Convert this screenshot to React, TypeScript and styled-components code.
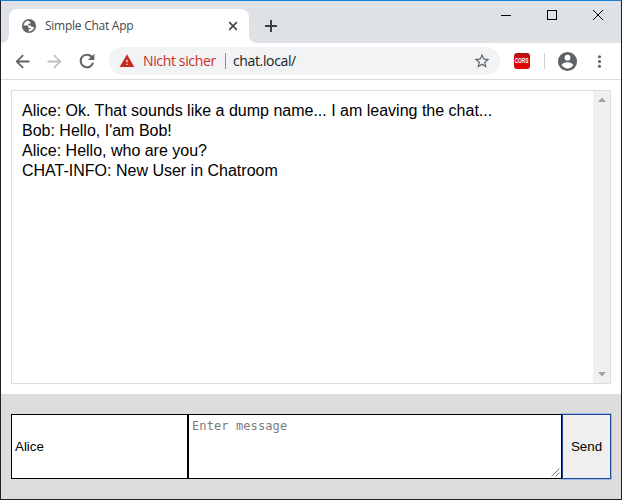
import React, { useState } from "react";
import styled, { createGlobalStyle } from "styled-components";

const GlobalStyle = createGlobalStyle`
  * { box-sizing: border-box; }
  html, body { margin: 0; padding: 0; }
  body { overflow: hidden; background: #fff; }
  svg { display: block; flex: none; }
`;

const Window = styled.div`
  display: flex;
  flex-direction: column;
  width: 622px;
  height: 500px;
  border: 1px solid #202124;
  border-top-color: #1883d7;
  background: #fff;
`;

const TabStrip = styled.header`
  display: flex;
  height: 42px;
  background: #dee1e6;
`;

const Tab = styled.div`
  position: relative;
  display: flex;
  align-items: center;
  width: 240px;
  height: 34px;
  margin: 8px 0 0 8px;
  padding: 0 10px 0 13px;
  border-radius: 8px 8px 0 0;
  background: #fff;

  &::before,
  &::after {
    content: "";
    position: absolute;
    bottom: 0;
    width: 8px;
    height: 8px;
  }
  &::before {
    left: -8px;
    background: radial-gradient(circle at 0 0, transparent 7.5px, #fff 8.3px);
  }
  &::after {
    right: -8px;
    background: radial-gradient(circle at 100% 0, transparent 7.5px, #fff 8.3px);
  }
`;

const TabTitle = styled.span`
  flex: 1;
  margin-left: 9px;
  font: 12px/16px "Open Sans", sans-serif;
  letter-spacing: -0.26px;
  color: #45494d;
  white-space: nowrap;
`;

const BareButton = styled.button`
  display: flex;
  align-items: center;
  justify-content: center;
  padding: 0;
  border: 0;
  background: transparent;
`;

const NewTab = styled(BareButton)`
  width: 28px;
  height: 34px;
  margin: 8px 0 0 8px;
`;

const Captions = styled.div`
  display: flex;
  height: 29px;
  margin-left: auto;
`;

const Caption = styled(BareButton)`
  width: 46px;
  height: 28px;
`;

const Toolbar = styled.nav`
  display: flex;
  align-items: center;
  height: 37px;
  padding-left: 5.5px;
  border-bottom: 1px solid #dcdcdc;
  background: #fff;
`;

const NavButton = styled(BareButton)`
  width: 32px;
  height: 28px;
`;

const AddressBar = styled.div`
  display: flex;
  align-items: center;
  width: 391px;
  height: 28px;
  margin-left: 6.5px;
  padding: 0 9px 0 10px;
  border-radius: 14px;
  background: #f1f3f4;
  font: 14px/20px "Open Sans", sans-serif;
  white-space: nowrap;
`;

const Warning = styled.span`
  width: 82px;
  margin-left: 8px;
  color: #c5301f;
  letter-spacing: -0.36px;
`;

const Divider = styled.span<{ $color: string }>`
  flex: none;
  width: 1px;
  height: 16px;
  background: ${(p) => p.$color};
`;

const Url = styled.span`
  flex: 1;
  margin-left: 7px;
  color: #202124;
  letter-spacing: -0.36px;
`;

const Extension = styled.span`
  display: flex;
  align-items: center;
  justify-content: center;
  width: 16px;
  height: 16px;
  margin: 0 14px 0 14px;
  border-radius: 3px;
  background: linear-gradient(#b51217, #d3090c 45%, #e60000);
  color: #fff;
  font: bold 8px/8px "Liberation Sans", sans-serif;
`;

const ExtensionLabel = styled.span`
  transform: scaleX(0.6);
`;

const Profile = styled.span`
  margin: 0 11px 0 11px;
`;

const Page = styled.main`
  display: flex;
  flex: 1;
  flex-direction: column;
  font-family: "Liberation Sans", Arial, sans-serif;
`;

const Chat = styled.section`
  display: flex;
  height: 294px;
  margin: 10px;
  border: 1px solid #ddd;
`;

const Messages = styled.div`
  flex: 1;
  padding: 10px;
  font-size: 16px;
  line-height: 20px;
  color: #000;
`;

const ScrollTrack = styled.div`
  display: flex;
  flex-direction: column;
  align-items: center;
  justify-content: space-between;
  width: 17px;
  padding: 6px 0;
  background: #f0f0f0;
`;

const Composer = styled.form`
  display: flex;
  flex: 1;
  padding: 20px 10px 19px;
  background: #ddd;
`;

const NameField = styled.input`
  width: 177px;
  height: 65px;
  margin: 0;
  padding: 1px 3px;
  border: 1px solid #000;
  border-radius: 0;
  outline: 0;
  background: #fff;
  color: #000;
  font: 13.333px "Liberation Sans", Arial, sans-serif;
`;

const MessageWrap = styled.div`
  position: relative;
  display: flex;
  width: 374px;
  height: 65px;
`;

const MessageField = styled.textarea`
  width: 100%;
  height: 100%;
  margin: 0;
  padding: 4px 3px;
  border: 1px solid #000;
  border-radius: 0;
  outline: 0;
  resize: none;
  overflow: hidden;
  background: #fff;
  color: #000;
  font: 12px/15px "DejaVu Sans Mono", monospace;
  letter-spacing: 0.1px;

  &::placeholder {
    color: #7c7c7c;
    opacity: 1;
  }
`;

const Grip = styled.svg`
  position: absolute;
  right: 2px;
  bottom: 2px;
`;

const SendButton = styled.button`
  width: 49px;
  height: 65px;
  padding: 0;
  border: 1px solid #1c4a94;
  border-radius: 0;
  background: #efefef;
  box-shadow: 0 0 0 1px rgba(120, 165, 235, 0.65);
  color: #000;
  font: 13.333px "Liberation Sans", Arial, sans-serif;
  outline: 0;
`;

const messages = [
  "Alice: Ok. That sounds like a dump name... I am leaving the chat...",
  "Bob: Hello, I'am Bob!",
  "Alice: Hello, who are you?",
  "CHAT-INFO: New User in Chatroom",
];

const Icon = ({ d, size, color }: { d: string; size: number; color: string }) => (
  <svg width={size} height={size} viewBox="0 0 24 24" fill={color}>
    <path d={d} />
  </svg>
);

const paths = {
  back: "M20 10.85H7.83l5.59-5.44L12 4l-8 8 8 8 1.41-1.41L7.83 13.15H20v-2.3z",
  forward: "M12 4l-1.41 1.41L16.17 10.85H4v2.3h12.17l-5.58 5.44L12 20l8-8z",
  reload:
    "M17.65 6.35A7.96 7.96 0 0 0 12 4a8 8 0 1 0 7.73 10h-2.4A5.7 5.7 0 1 1 12 6.3c1.56 0 2.94.63 3.98 1.72L13 11h7V4l-2.35 2.35z",
  warning: "M1 21h22L12 2 1 21zm12-3h-2v-2h2v2zm0-4h-2v-4h2v4z",
  star: "M22 9.24l-7.19-.62L12 2 9.19 8.63 2 9.24l5.46 4.73L5.82 21 12 17.27 18.18 21l-1.63-7.03L22 9.24zM12 15.4l-3.76 2.27 1-4.28-3.32-2.88 4.38-.38L12 6.1l1.71 4.04 4.38.38-3.32 2.88 1 4.28L12 15.4z",
  profile:
    "M12 2a10 10 0 1 0 0 20 10 10 0 0 0 0-20zm0 3a3 3 0 1 1 0 6 3 3 0 0 1 0-6zm0 14.2a7.2 7.2 0 0 1-6-3.22c.03-1.99 4-3.08 6-3.08s5.97 1.09 6 3.08a7.2 7.2 0 0 1-6 3.22z",
  more: "M12 8a2 2 0 1 0 0-4 2 2 0 0 0 0 4zm0 2a2 2 0 1 0 0 4 2 2 0 0 0 0-4zm0 6a2 2 0 1 0 0 4 2 2 0 0 0 0-4z",
};

const Globe = () => (
  <svg width="14" height="14" viewBox="0 0 14 14">
    <circle cx="7" cy="7" r="7" fill="#5f6368" />
    <path
      d="M6.4 1.6C3.8 1.9 1.8 4 1.6 6.6h2.8c1.4 0 2 .7 2 1.6v.9h2v1.2H6.7v2.1c2.6.1 4.8-1.4 5.5-3.8-.5-.6-1.2-.8-2-.8H9V6.4H6.3V4.7h1.2c.7 0 .9-.4.9-1V3c-.9 0-1.7-.6-2-1.4z"
      fill="#fff"
    />
  </svg>
);

export default function App() {
  const [name, setName] = useState("Alice");
  const [message, setMessage] = useState("");

  return (
    <>
      <GlobalStyle />
      <Window>
        <TabStrip>
          <Tab>
            <Globe />
            <TabTitle>Simple Chat App</TabTitle>
            <BareButton aria-label="Close tab">
              <svg width="12" height="12" viewBox="0 0 12 12" stroke="#45494d" strokeWidth="1.7">
                <path d="M2.2 2.2l7.6 7.6M9.8 2.2l-7.6 7.6" />
              </svg>
            </BareButton>
          </Tab>
          <NewTab aria-label="New tab">
            <svg width="12" height="12" viewBox="0 0 12 12" stroke="#3c4043" strokeWidth="2">
              <path d="M6 0v12M0 6h12" />
            </svg>
          </NewTab>
          <Captions>
            <Caption aria-label="Minimize">
              <svg width="10" height="10" shapeRendering="crispEdges">
                <path d="M0 5.5h10" stroke="#000" />
              </svg>
            </Caption>
            <Caption aria-label="Maximize">
              <svg width="10" height="10" shapeRendering="crispEdges">
                <path d="M.5.5h9v9h-9z" fill="none" stroke="#000" />
              </svg>
            </Caption>
            <Caption aria-label="Close">
              <svg width="10" height="10">
                <path d="M0 0l10 10M10 0L0 10" stroke="#000" />
              </svg>
            </Caption>
          </Captions>
        </TabStrip>

        <Toolbar>
          <NavButton aria-label="Back">
            <Icon d={paths.back} size={21} color="#5f6368" />
          </NavButton>
          <NavButton aria-label="Forward">
            <Icon d={paths.forward} size={21} color="#bdbfc1" />
          </NavButton>
          <NavButton aria-label="Reload">
            <Icon d={paths.reload} size={22} color="#5f6368" />
          </NavButton>
          <AddressBar>
            <Icon d={paths.warning} size={16} color="#c92a20" />
            <Warning>Nicht sicher</Warning>
            <Divider $color="#8d9093" />
            <Url>chat.local/</Url>
            <Icon d={paths.star} size={18} color="#5f6368" />
          </AddressBar>
          <Extension>
            <ExtensionLabel>CORS</ExtensionLabel>
          </Extension>
          <Divider $color="#cfd1d4" />
          <Profile>
            <Icon d={paths.profile} size={23} color="#5f6368" />
          </Profile>
          <Icon d={paths.more} size={19} color="#5f6368" />
        </Toolbar>

        <Page>
          <Chat>
            <Messages>
              {messages.map((m) => (
                <div key={m}>{m}</div>
              ))}
            </Messages>
            <ScrollTrack>
              <svg width="8" height="5">
                <path d="M0 5L4 0.5 8 5z" fill="#a3a3a3" />
              </svg>
              <svg width="8" height="5">
                <path d="M0 0L4 4.5 8 0z" fill="#a3a3a3" />
              </svg>
            </ScrollTrack>
          </Chat>
          <Composer onSubmit={(e) => e.preventDefault()}>
            <NameField value={name} onChange={(e) => setName(e.target.value)} />
            <MessageWrap>
              <MessageField
                placeholder="Enter message"
                value={message}
                onChange={(e) => setMessage(e.target.value)}
              />
              <Grip width="9" height="9" viewBox="0 0 9 9">
                <path d="M.5 8.5l8-8M4.5 8.5l4-4" stroke="#666" strokeWidth="0.9" />
              </Grip>
            </MessageWrap>
            <SendButton type="submit">Send</SendButton>
          </Composer>
        </Page>
      </Window>
    </>
  );
}
